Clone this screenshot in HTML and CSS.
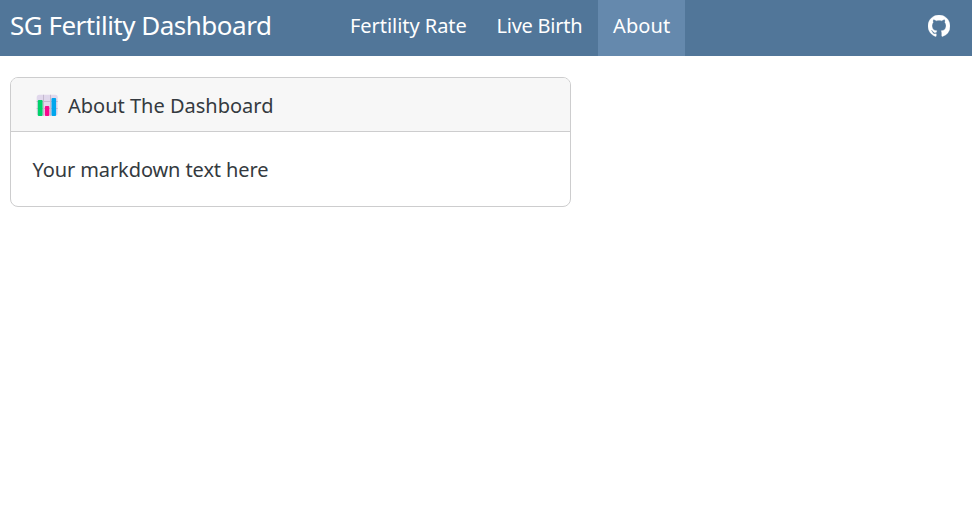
FILE: index.html
```html
<!DOCTYPE html>
<html lang="en">
<head>
<meta charset="utf-8">
<title>SG Fertility Dashboard</title>
<link rel="stylesheet" href="styles.css">
</head>
<body>
<header class="navbar">
  <span class="brand">SG Fertility Dashboard</span>
  <nav class="nav">
    <a class="nav-link rate">Fertility Rate</a>
    <a class="nav-link birth">Live Birth</a>
    <a class="nav-link about active">About</a>
  </nav>
  <a class="github" aria-label="GitHub">
    <svg viewBox="0 0 16 16" width="22" height="22" fill="currentColor" stroke="currentColor" stroke-width=".25"><path d="M8 0C3.58 0 0 3.58 0 8c0 3.54 2.29 6.53 5.47 7.59.4.07.55-.17.55-.38 0-.19-.01-.82-.01-1.49-2.01.37-2.53-.49-2.69-.94-.09-.23-.48-.94-.82-1.13-.28-.15-.68-.52-.01-.53.63-.01 1.08.58 1.23.82.72 1.21 1.87.87 2.33.66.07-.52.28-.87.51-1.07-1.78-.2-3.64-.89-3.64-3.95 0-.87.31-1.59.82-2.15-.08-.2-.36-1.02.08-2.12 0 0 .67-.21 2.2.82.64-.18 1.32-.27 2-.27s1.36.09 2 .27c1.53-1.04 2.2-.82 2.2-.82.44 1.1.16 1.92.08 2.12.51.56.82 1.27.82 2.15 0 3.07-1.87 3.75-3.65 3.95.29.25.54.73.54 1.48 0 1.07-.01 1.93-.01 2.2 0 .21.15.46.55.38A8.01 8.01 0 0 0 16 8c0-4.42-3.58-8-8-8z"/></svg>
  </a>
</header>
<main class="content">
  <section class="card">
    <h1 class="card-header">
      <svg class="chart" viewBox="0 0 22 22" width="22" height="22">
        <rect x=".7" y=".8" width="21" height="21" rx="2.5" fill="#e1d8ec"/>
        <path d="M.7 7.5h21M.7 14.5h21M7.5 .8v21M14.5 .8v21" stroke="#c4b9ce" fill="none"/>
        <rect x="1.8" y="6" width="4.8" height="16" rx="1" fill="#00d26a"/>
        <rect x="8.9" y="12" width="4.4" height="10" rx="1" fill="#f8088e"/>
        <rect x="15.5" y="4" width="4.6" height="18" rx="1" fill="#00a6ed"/>
      </svg>
      <span class="title">About The Dashboard</span>
    </h1>
    <p class="card-body">Your markdown text here</p>
  </section>
</main>
</body>
</html>
```
FILE: styles.css
```css
* { box-sizing: border-box; }
body {
  margin: 0;
  background: #fff;
  color: #343a40;
  font: 20px/32px "Segoe UI", "Noto Sans", sans-serif;
}
.navbar {
  display: flex;
  height: 56px;
  padding: 0 22px 0 10px;
  background: #517699;
  color: #fff;
}
.brand {
  width: 325px;
  padding-top: 9px;
  font-size: 26px;
  white-space: nowrap;
  letter-spacing: -0.5px;
}
.nav { display: flex; }
.nav-link {
  padding: 10px 0 0 15px;
  white-space: nowrap;
}
.rate { width: 147px; letter-spacing: -0.05px; }
.birth { width: 116px; padding-left: 14.5px; letter-spacing: -0.25px; }
.about { width: 87px; letter-spacing: 0.1px; }
.active { background: #6589ad; }
.github { margin: 15px 0 0 auto; height: 22px; }
.github svg, .chart { display: block; }
.content { padding: 21px 10px; }
.card {
  width: 561px;
  height: 130px;
  border: 1px solid #cdcdce;
  border-radius: 8px;
  overflow: hidden;
}
.card-header {
  display: flex;
  align-items: center;
  gap: 10px;
  height: 54px;
  margin: 0;
  padding: 1px 25px 0;
  border-bottom: 1px solid #cdcdce;
  background: #f7f7f7;
  font: inherit;
}
.title { padding-top: 1px; }
.card-body {
  margin: 0;
  padding: 22px 21px 20px 21.5px;
  letter-spacing: -0.1px;
}
```
